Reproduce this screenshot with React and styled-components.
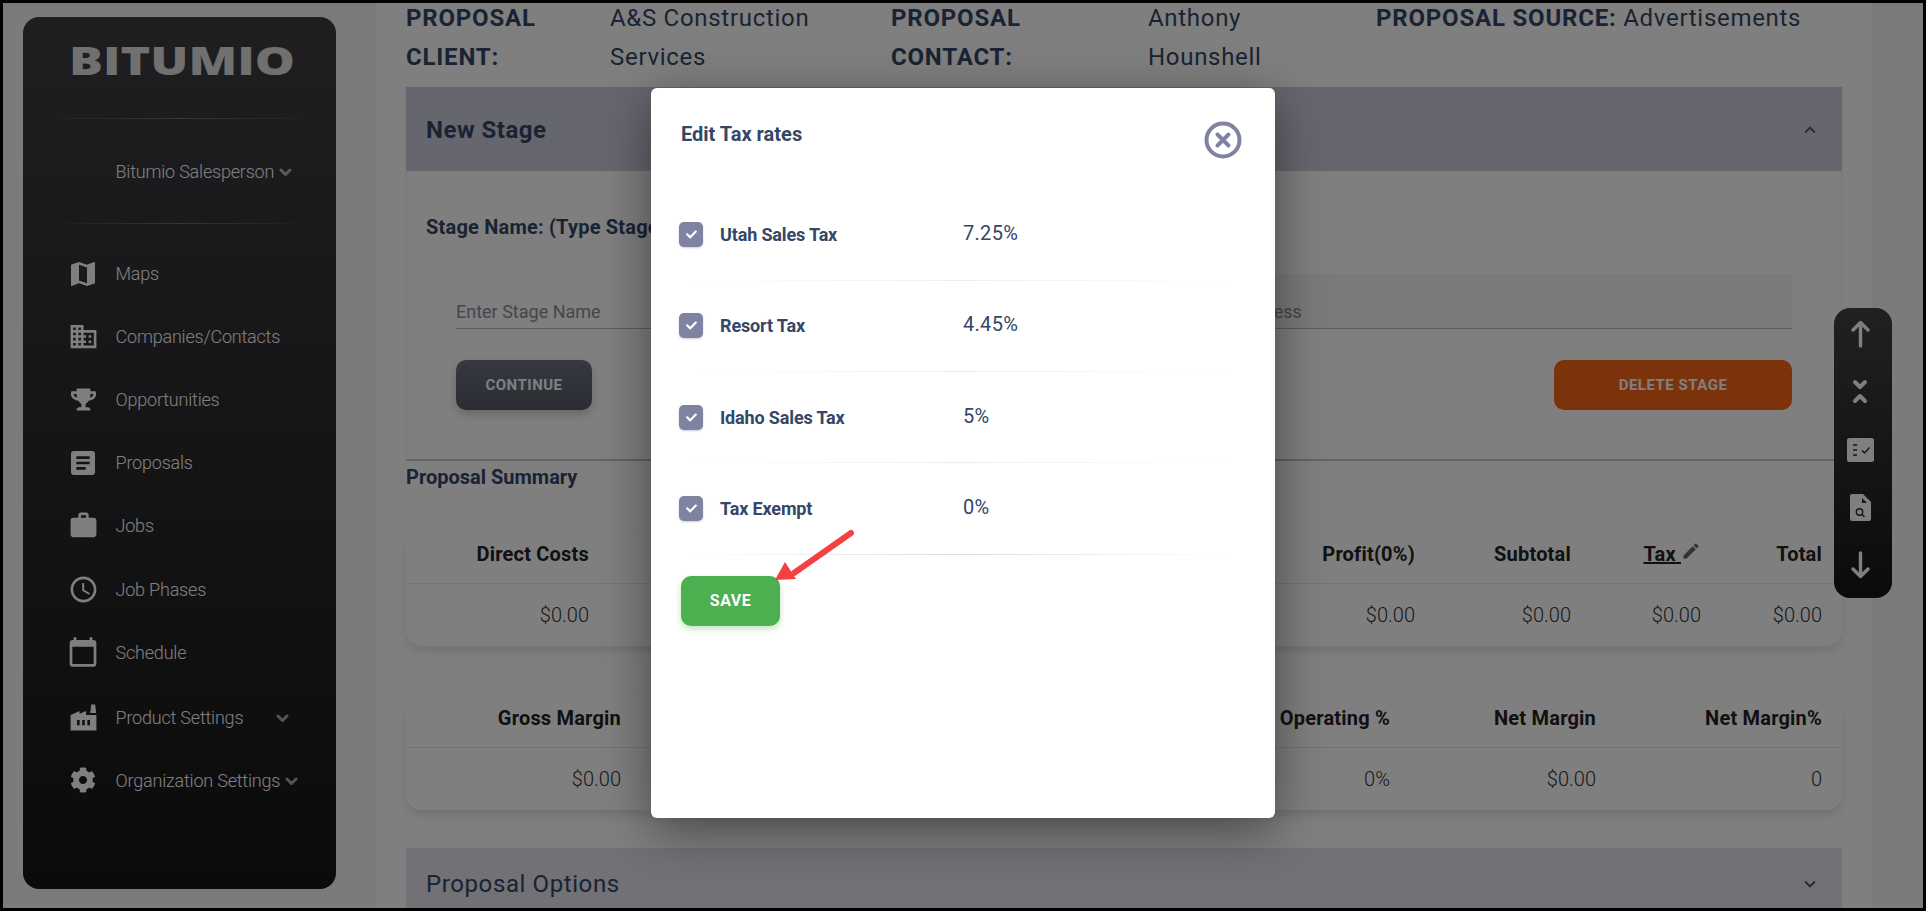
import React from 'react';
import styled, { createGlobalStyle } from 'styled-components';
import { FaTrophy, FaCog, FaCheck } from 'react-icons/fa';
import {
  MdMap,
  MdDomain,
  MdArticle,
  MdWork,
  MdAccessTime,
  MdCalendarToday,
  MdFactory,
  MdEdit,
  MdKeyboardArrowUp,
  MdKeyboardArrowDown,
} from 'react-icons/md';

const Global = createGlobalStyle`
  html, body { margin: 0; padding: 0; background: #000; overflow: hidden; }
  * { box-sizing: border-box; }
  body { font-family: Roboto, "Liberation Sans", sans-serif; }
`;

const Frame = styled.div`
  position: relative;
  width: 1920px;
  height: 905px;
  margin: 3px;
  display: flex;
  overflow: hidden;
  background: #f5f6f7;
`;

const SidebarColumn = styled.div`
  width: 373px;
  flex: none;
  padding: 14px 0 19px 20px;
`;

const Sidebar = styled.aside`
  width: 313px;
  height: 872px;
  border-radius: 16px;
  background: linear-gradient(180deg, #3e3e43 0%, #161617 100%);
  color: #fff;
`;

const LogoWrap = styled.div`
  height: 101px;
  padding: 30px 0 0 49px;
`;

const Logo = styled.svg`
  display: block;
  width: 220px;
  height: 28px;
  overflow: visible;
`;

const Divider = styled.div`
  height: 1px;
  margin: 0 ${(p) => p.$inset || 5}px;
  background: linear-gradient(90deg, transparent, rgba(255, 255, 255, 0.28) 50%, transparent);
`;

const UserRow = styled.div`
  height: 104px;
  padding-left: 92.5px;
  display: flex;
  align-items: center;
  font-size: 18px;
  font-weight: 300;
  letter-spacing: -0.2px;
`;

const Nav = styled.nav`
  margin-top: 18px;
  display: flex;
  flex-direction: column;
`;

const NavItem = styled.div`
  height: 63.1px;
  margin-top: ${(p) => p.$drop || 0}px;
  display: flex;
  align-items: center;
  padding-left: 47px;
  font-size: 18px;
  font-weight: 300;
  letter-spacing: -0.2px;
`;

const NavIcon = styled.span`
  width: 26px;
  height: 26px;
  margin-right: 19.5px;
  display: flex;
  align-items: center;
  justify-content: center;
  & svg { flex: none; }
`;

const Caret = styled.svg`
  width: 13px;
  height: 9px;
  flex: none;
  margin-left: ${(p) => p.$gap}px;
  margin-top: 3px;
  fill: none;
  stroke: currentColor;
  stroke-width: 3;
  stroke-linecap: round;
  stroke-linejoin: round;
  opacity: 0.62;
`;

const Main = styled.main`
  width: 1496px;
  flex: none;
  background: #fff;
  padding: 0 30px;
`;

const InfoRow = styled.div`
  margin-top: -4px;
  display: grid;
  grid-template-columns: 204px 281px 257px 229px 1fr;
  font-size: 24px;
  line-height: 39px;
  color: #344767;
  letter-spacing: 0.7px;
`;

const InfoLabel = styled.div`
  font-weight: 700;
  letter-spacing: 0.8px;
  padding-right: 40px;
`;

const InfoValue = styled.div`
  padding-right: 30px;
`;

const InfoSource = styled.div`
  white-space: nowrap;
  margin-left: -1px;
  & b { letter-spacing: 0.8px; }
`;

const PanelHead = styled.div`
  height: ${(p) => p.$height}px;
  margin-top: ${(p) => p.$top}px;
  padding: 1px 21px 0 20px;
  display: flex;
  align-items: center;
  justify-content: space-between;
  background: ${(p) => p.$bg};
  color: #344767;
  font-size: 24px;
  font-weight: ${(p) => p.$weight};
  letter-spacing: ${(p) => p.$spacing}px;
`;

const PanelCaret = styled.span`
  display: flex;
  color: #555;
`;

const StageBody = styled.div`
  height: 290px;
  border-left: 1px solid #f0f0f0;
  border-right: 1px solid #f0f0f0;
  border-bottom: 2px solid #c4c4c4;
  padding: 44px 49px 0 19px;
`;

const StageLabel = styled.div`
  font-size: 20px;
  line-height: 24px;
  font-weight: 700;
  color: #344767;
  letter-spacing: 0.2px;
`;

const InputGrid = styled.div`
  margin: 35px 0 0 30px;
  display: grid;
  grid-template-columns: 1fr 1fr;
  gap: 30px;
`;

const Field = styled.div`
  height: 55px;
  padding-bottom: 6px;
  display: flex;
  align-items: flex-end;
  background: ${(p) => (p.$shaded ? '#f4f4f4' : 'transparent')};
  border-bottom: 1px solid #bbb;
  font-size: 18px;
  color: #8a8a9a;
`;

const ButtonRow = styled.div`
  margin: 31px 0 0 30px;
  display: flex;
  justify-content: space-between;
`;

const ActionButton = styled.div`
  width: ${(p) => p.$width}px;
  height: 50px;
  border-radius: 10px;
  display: flex;
  align-items: center;
  justify-content: center;
  background: ${(p) => p.$bg};
  color: #fff;
  font-size: 15px;
  font-weight: 700;
  letter-spacing: 0.5px;
  box-shadow: ${(p) => p.$shadow || 'none'};
`;

const SummaryTitle = styled.div`
  margin-top: 4px;
  font-size: 20px;
  line-height: 24px;
  font-weight: 700;
  color: #344767;
`;

const Card = styled.div`
  margin-top: ${(p) => p.$top}px;
  height: 115px;
  border-radius: 16px;
  background: #fff;
  box-shadow: 0 6px 10px rgba(0, 0, 0, 0.1);
`;

const CardRow = styled.div`
  height: ${(p) => p.$height}px;
  padding-right: 20px;
  padding-bottom: ${(p) => (p.$ruled ? 7 : 0)}px;
  display: grid;
  grid-template-columns: ${(p) => p.$cols};
  align-items: center;
  border-bottom: ${(p) => (p.$ruled ? '1px solid #e8e8e8' : 'none')};
`;

const HeadCell = styled.div`
  font-size: 20px;
  font-weight: 700;
  color: #222;
  letter-spacing: 0.2px;
  white-space: pre;
  display: flex;
  justify-content: flex-end;
  align-items: center;
`;

const TaxLabel = styled.span`
  text-decoration: underline;
`;

const Pencil = styled(MdEdit)`
  width: 20px;
  height: 20px;
  color: #666;
  margin-top: -6px;
`;

const ValueCell = styled.div`
  text-align: right;
  font-size: 20px;
  font-weight: 300;
  color: #333;
`;

const RightGutter = styled.div`
  flex: 1;
`;

const Toolbar = styled.div`
  position: absolute;
  left: 1831px;
  top: 305px;
  width: 58px;
  height: 290px;
  border-radius: 16px;
  background: linear-gradient(180deg, #424247 0%, #161617 100%);
  display: flex;
  flex-direction: column;
  align-items: center;
  justify-content: space-between;
  padding: 8px 6px 15px 0;
  color: #fff;
  z-index: 1;
`;

const ToolIcon = styled.span`
  height: 36px;
  display: flex;
  align-items: center;
  justify-content: center;
`;

const Overlay = styled.div`
  position: absolute;
  inset: 0;
  z-index: 2;
  background: rgba(0, 0, 0, 0.5);
  display: flex;
  align-items: center;
  justify-content: center;
`;

const Modal = styled.div`
  position: relative;
  width: 624px;
  height: 730px;
  margin-top: -6px;
  border-radius: 6px;
  background: #fff;
  box-shadow: 0 12px 50px rgba(0, 0, 0, 0.45);
  padding: 33px 33px 0 28px;
`;

const ModalHead = styled.div`
  display: flex;
  justify-content: space-between;
  align-items: flex-start;
`;

const ModalTitle = styled.div`
  margin-left: 2px;
  font-size: 20px;
  line-height: 26px;
  font-weight: 700;
  color: #344767;
`;

const CloseIcon = styled.svg`
  width: 38px;
  height: 38px;
  flex: none;
`;

const TaxList = styled.div`
  margin-top: 31px;
`;

const TaxRow = styled.div`
  height: 90.3px;
  display: flex;
  align-items: center;
`;

const Check = styled.span`
  width: 24px;
  height: 25px;
  flex: none;
  border-radius: 5px;
  background: #7f82a0;
  color: #fff;
  display: flex;
  align-items: center;
  justify-content: center;
  box-shadow: 0 1px 2px rgba(127, 130, 160, 0.4);
`;

const TaxName = styled.div`
  width: 243px;
  margin-left: 17px;
  font-size: 18px;
  font-weight: 700;
  color: #344767;
  letter-spacing: -0.15px;
`;

const TaxRate = styled.div`
  margin-top: -3px;
  font-size: 20px;
  font-weight: 400;
  color: #344767;
  letter-spacing: 0.3px;
`;

const TaxRule = styled.div`
  height: 1px;
  margin: 0 10px;
  background: linear-gradient(90deg, transparent, ${(p) => (p.$strong ? '#dcdce8' : '#eeeef2')} 50%, transparent);
`;

const SaveButton = styled(ActionButton)`
  margin: 21px 0 0 2px;
  font-size: 16px;
`;

const Arrow = styled.svg`
  position: absolute;
  left: 119px;
  top: 440px;
  width: 90px;
  height: 60px;
`;

const menu = [
  { icon: <MdMap size={32} />, label: 'Maps' },
  { icon: <MdDomain size={31} />, label: 'Companies/Contacts' },
  { icon: <FaTrophy size={25} />, label: 'Opportunities' },
  { icon: <MdArticle size={32} />, label: 'Proposals' },
  { icon: <MdWork size={31} />, label: 'Jobs' },
  { icon: <MdAccessTime size={31} />, label: 'Job Phases' },
  { icon: <MdCalendarToday size={32} />, label: 'Schedule' },
  { icon: <MdFactory size={31} />, label: 'Product Settings', caret: 33, drop: 2 },
  { icon: <FaCog size={26} />, label: 'Organization Settings', caret: 5 },
];

const costCols = '183px 1fr 131px 156px 130px 121px';
const marginCols = '215px 1fr 130px 206px 226px';

const taxes = [
  { name: 'Utah Sales Tax', rate: '7.25%' },
  { name: 'Resort Tax', rate: '4.45%' },
  { name: 'Idaho Sales Tax', rate: '5%' },
  { name: 'Tax Exempt', rate: '0%' },
];

const CaretIcon = ({ gap }) => (
  <Caret $gap={gap} viewBox="0 0 13 9">
    <path d="M2 2l4.5 4.5L11 2" />
  </Caret>
);

export default function App() {
  return (
    <Frame>
      <Global />
      <SidebarColumn>
        <Sidebar>
          <LogoWrap>
            <Logo viewBox="0 0 220 28">
              <text
                x="-3"
                y="28"
                textLength="226"
                lengthAdjust="spacingAndGlyphs"
                fontFamily="Open Sans, sans-serif"
                fontWeight="800"
                fontSize="39"
                fill="#fff"
                fillOpacity="0.85"
              >
                BITUMIO
              </text>
            </Logo>
          </LogoWrap>
          <Divider />
          <UserRow>
            Bitumio Salesperson
            <CaretIcon gap={5} />
          </UserRow>
          <Divider $inset={20} />
          <Nav>
            {menu.map((m) => (
              <NavItem key={m.label} $drop={m.drop}>
                <NavIcon>{m.icon}</NavIcon>
                {m.label}
                {m.caret && <CaretIcon gap={m.caret} />}
              </NavItem>
            ))}
          </Nav>
        </Sidebar>
      </SidebarColumn>

      <Main>
        <InfoRow>
          <InfoLabel>PROPOSAL CLIENT:</InfoLabel>
          <InfoValue>A&amp;S Construction Services</InfoValue>
          <InfoLabel>PROPOSAL CONTACT:</InfoLabel>
          <InfoValue>Anthony Hounshell</InfoValue>
          <InfoSource>
            <b>PROPOSAL SOURCE:</b> Advertisements
          </InfoSource>
        </InfoRow>

        <PanelHead $height={84} $top={10} $bg="#cdcdde" $weight={700} $spacing={0.5}>
          New Stage
          <PanelCaret>
            <MdKeyboardArrowUp size={22} />
          </PanelCaret>
        </PanelHead>
        <StageBody>
          <StageLabel>Stage Name: (Type Stage Name)</StageLabel>
          <InputGrid>
            <Field>Enter Stage Name</Field>
            <Field $shaded>Enter Stage Address</Field>
          </InputGrid>
          <ButtonRow>
            <ActionButton
              $width={136}
              $bg="linear-gradient(180deg, #6c7280, #565a66)"
              $shadow="0 4px 8px rgba(0,0,0,0.2)"
            >
              CONTINUE
            </ActionButton>
            <ActionButton $width={238} $bg="#f86618">
              DELETE STAGE
            </ActionButton>
          </ButtonRow>
        </StageBody>

        <SummaryTitle>Proposal Summary</SummaryTitle>

        <Card $top={42}>
          <CardRow $height={53} $cols={costCols} $ruled>
            <HeadCell>Direct Costs</HeadCell>
            <span />
            <HeadCell>Profit(0%)</HeadCell>
            <HeadCell>Subtotal</HeadCell>
            <HeadCell>
              <TaxLabel>Tax </TaxLabel>
              <Pencil />
            </HeadCell>
            <HeadCell>Total</HeadCell>
          </CardRow>
          <CardRow $height={62} $cols={costCols}>
            <ValueCell>$0.00</ValueCell>
            <span />
            <ValueCell>$0.00</ValueCell>
            <ValueCell>$0.00</ValueCell>
            <ValueCell>$0.00</ValueCell>
            <ValueCell>$0.00</ValueCell>
          </CardRow>
        </Card>

        <Card $top={49}>
          <CardRow $height={53} $cols={marginCols} $ruled>
            <HeadCell>Gross Margin</HeadCell>
            <span />
            <HeadCell>Operating %</HeadCell>
            <HeadCell>Net Margin</HeadCell>
            <HeadCell>Net Margin%</HeadCell>
          </CardRow>
          <CardRow $height={62} $cols={marginCols}>
            <ValueCell>$0.00</ValueCell>
            <span />
            <ValueCell>0%</ValueCell>
            <ValueCell>$0.00</ValueCell>
            <ValueCell>0</ValueCell>
          </CardRow>
        </Card>

        <PanelHead $height={70} $top={38} $bg="#e2e2ec" $weight={400} $spacing={0.6}>
          Proposal Options
          <PanelCaret>
            <MdKeyboardArrowDown size={22} />
          </PanelCaret>
        </PanelHead>
      </Main>

      <RightGutter />

      <Toolbar>
        <ToolIcon>
          <svg width="21" height="28" viewBox="0 0 21 28" fill="none" stroke="currentColor" strokeWidth="3.4" strokeLinecap="round" strokeLinejoin="round">
            <path d="M10.5 26V2.5M3 10l7.5-7.5L18 10" />
          </svg>
        </ToolIcon>
        <ToolIcon>
          <svg width="20" height="28" viewBox="0 0 20 28" fill="none" stroke="currentColor" strokeWidth="4" strokeLinecap="round" strokeLinejoin="round">
            <path d="M5 4l5 5 5-5M5 23l5-5 5 5" />
          </svg>
        </ToolIcon>
        <ToolIcon>
          <svg width="27" height="24" viewBox="0 0 27 24">
            <rect width="27" height="24" rx="2.5" fill="currentColor" />
            <path d="M6 7h4M6 12h4M6 17h4" stroke="#2b2b2e" strokeWidth="1.6" fill="none" />
            <path d="M15 12.5l2.5 2.5 5-5.5" stroke="#2b2b2e" strokeWidth="1.4" fill="none" />
          </svg>
        </ToolIcon>
        <ToolIcon>
          <svg width="22" height="27" viewBox="0 0 22 27">
            <path d="M3 0h11l8 8v17a2 2 0 0 1-2 2H3a2 2 0 0 1-2-2V2a2 2 0 0 1 2-2z" fill="currentColor" />
            <path d="M13 4v5h5z" fill="#2b2b2e" />
            <circle cx="10.5" cy="18" r="3.2" stroke="#2b2b2e" strokeWidth="1.4" fill="none" />
            <path d="M13 20.5l2.5 2.5" stroke="#2b2b2e" strokeWidth="1.4" />
          </svg>
        </ToolIcon>
        <ToolIcon>
          <svg width="21" height="28" viewBox="0 0 21 28" fill="none" stroke="currentColor" strokeWidth="3.4" strokeLinecap="round" strokeLinejoin="round">
            <path d="M10.5 2v23.5M3 18l7.5 7.5L18 18" />
          </svg>
        </ToolIcon>
      </Toolbar>

      <Overlay>
        <Modal>
          <ModalHead>
            <ModalTitle>Edit Tax rates</ModalTitle>
            <CloseIcon viewBox="0 0 38 38" fill="none" stroke="#8083a0" strokeWidth="4">
              <circle cx="19" cy="19" r="16.5" />
              <path d="M13.5 13.5l11 11M24.5 13.5l-11 11" strokeLinecap="round" />
            </CloseIcon>
          </ModalHead>
          <TaxList>
            {taxes.map((t, i) => (
              <React.Fragment key={t.name}>
                <TaxRow>
                  <Check>
                    <FaCheck size={11} />
                  </Check>
                  <TaxName>{t.name}</TaxName>
                  <TaxRate>{t.rate}</TaxRate>
                </TaxRow>
                <TaxRule $strong={i === taxes.length - 1} />
              </React.Fragment>
            ))}
          </TaxList>
          <SaveButton $width={99} $bg="#4caf50" $shadow="0 3px 6px rgba(76,175,80,0.35)">
            SAVE
          </SaveButton>
          <Arrow viewBox="0 0 90 60">
            <path d="M81 5L24 45" stroke="#f44040" strokeWidth="6" strokeLinecap="round" fill="none" />
            <path d="M5 52L15 34L26 51Z" fill="#f44040" />
          </Arrow>
        </Modal>
      </Overlay>
    </Frame>
  );
}
